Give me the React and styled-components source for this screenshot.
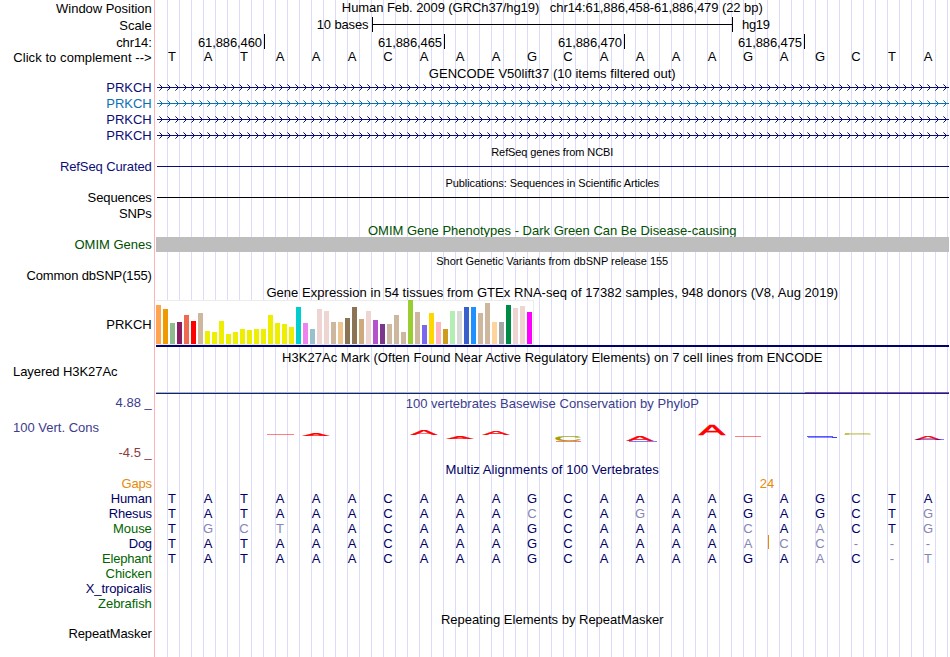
import React from 'react';
import styled, { createGlobalStyle } from 'styled-components';

const GlobalStyle = createGlobalStyle`
  body { margin: 0; background: #fff; }
  * { box-sizing: border-box; }
`;

const NAVY = '#0c0c78';
const DEEP = '#000064';
const GREEN = '#006400';
const ORANGE = '#e68a0a';

const Browser = styled.main`
  width: 949px;
  height: 657px;
  overflow: hidden;
  font: 13px/15px "Liberation Sans", Arial, sans-serif;
  color: #000;
  background:
    linear-gradient(#ffb4b4, #ffb4b4) 154px 0 / 1px 100% no-repeat,
    repeating-linear-gradient(to right, transparent 0 11px, #dcdcfa 11px 12px) 156px 0 / 793px 100% no-repeat;
`;

const Row = styled.div`
  display: grid;
  grid-template-columns: 154px 795px;
  height: ${(p) => p.$h}px;
`;

const Labels = styled.div`
  display: flex;
  flex-direction: column;
  gap: 10px;
  padding: ${(p) => p.$top || 0}px 2.25px 0 13px;
`;

const Label = styled.span`
  align-self: ${(p) => (p.$left ? 'flex-start' : 'flex-end')};
  height: 15px;
  white-space: pre;
  color: ${(p) => p.$color || '#000'};
  letter-spacing: ${(p) => p.$ls || 0}px;
`;

const Track = styled.div`
  display: flex;
  flex-direction: column;
  min-width: 0;
  padding-left: 2px;
  padding-top: ${(p) => p.$top || 0}px;
`;

const Title = styled.h2`
  flex: none;
  margin: 0;
  padding-top: ${(p) => p.$top || 0}px;
  padding-right: 0.5px;
  height: 15px;
  overflow: ${(p) => (p.$clip ? 'hidden' : 'visible')};
  text-align: center;
  white-space: pre;
  font-weight: 400;
  font-size: ${(p) => (p.$small ? 11 : 13)}px;
  line-height: ${(p) => (p.$small ? 12 : 15)}px;
  color: ${(p) => p.$color || '#000'};
  letter-spacing: ${(p) => p.$ls || 0}px;
`;

const ScaleTrack = styled.div`
  display: grid;
  grid-template-columns: 214.5px 361px auto;
  column-gap: 3.5px;
  height: 15px;
`;

const ScaleText = styled.span`
  text-align: ${(p) => (p.$end ? 'right' : 'left')};
  padding-left: ${(p) => (p.$end ? 0 : 5.5)}px;
  letter-spacing: ${(p) => p.$ls}px;
  white-space: nowrap;
`;

const ScaleBar = styled.div`
  height: 15px;
  border: solid #000;
  border-width: 0 1px;
  background: linear-gradient(#000, #000) 0 7px / 100% 1px no-repeat;
`;

const Ruler = styled.div`
  display: grid;
  grid-template-columns: 111px repeat(3, 180px);
  padding-top: 1px;
`;

const Tick = styled.span`
  height: 15px;
  padding: 1px 2px 0 0;
  line-height: 15px;
  border-right: 1px solid #000;
  text-align: right;
  letter-spacing: -0.1px;
`;

const Bases = styled.div`
  position: relative;
  display: grid;
  grid-template-columns: repeat(22, 36px);
  height: 15px;
  text-align: center;
`;

const Base = styled.span`
  color: ${(p) => p.$color};
`;

const GapCount = styled.span`
  grid-column: 17 / span 2;
  padding-left: 2px;
  color: ${ORANGE};
`;

const Insertion = styled.span`
  position: absolute;
  left: 614px;
  top: -1px;
  width: 1px;
  height: 14px;
  background: ${ORANGE};
`;

const Rule = styled.div`
  height: 1px;
  margin: 7px 0 0 1px;
  background: ${(p) => p.$color};
`;

const OmimBar = styled.div`
  height: 15px;
  background: #bebebe;
`;

const Expression = styled.div`
  display: flex;
  align-items: flex-end;
  gap: 2px;
  width: 378px;
  height: 45px;
  background: #fff;
  border: solid #ececec;
  border-width: 1px 1px 1px 0;
`;

const Tissue = styled.span`
  flex: none;
  width: 5px;
  height: ${(p) => p.$h}px;
  background: ${(p) => p.$c};
`;

const GeneModel = styled.div`
  height: 2px;
  background: #00006e;
`;

const Signal = styled.div`
  height: 2px;
  margin-top: 28px;
  background:
    linear-gradient(to right, #73c3ff 649px, #5a5aff 649px) 0 0 / 100% 1px no-repeat,
    #46143c;
`;

const Drawing = styled.svg`
  display: block;
  flex: none;
  font: 13px "Liberation Sans", Arial, sans-serif;
`;

// Strand arrows, one every 8px; the tips of the arms are drawn fainter.
const steps = Array.from({ length: 99 }, (_, i) => 6 + i * 8);
const dots = (offsets) =>
  steps.flatMap((x) => offsets.map((d) => `M${x - Math.abs(d)} ${7 + d}h1v1h-1z`)).join('');
const armDots = dots([-2, -1, 1, 2]);
const tipDots = dots([-3, 3]);

function Intron({ color }) {
  return (
    <Drawing width="793" height="16" shapeRendering="crispEdges">
      <path d="M1 7.5H793" stroke={color} />
      <path d={armDots} fill={color} />
      <path d={tipDots} fill={color} fillOpacity="0.6" />
    </Drawing>
  );
}

const HUMAN = 'TATAAACAAAGCAAAAGAGCTA';

function Sequence({ bases, color = DEEP, children }) {
  return (
    <Bases>
      {[...bases].map((b, i) => (
        <Base key={i} $color={b === HUMAN[i] ? color : '#8686b4'}>{b}</Base>
      ))}
      {children}
    </Bases>
  );
}

const Y = '#eeee00';
const TAN = '#cdb79e';
const PINK = '#eed5d2';
const tissues = [
  [39, '#ffa54f'], [35, '#ee9a00'], [21, '#8fbc8f'], [22, '#8b1c62'], [29, '#ee6a50'], [23, '#ff0000'], [31, TAN],
  [13, Y], [12, Y], [23, Y], [10, Y], [12, Y], [15, Y], [14, Y], [15, Y], [15, Y], [29, Y], [21, Y], [20, Y], [17, Y],
  [37, '#00cdcd'], [21, '#ee82ee'], [15, '#9ac0cd'], [35, PINK], [33, PINK], [22, TAN], [22, '#eec591'],
  [26, '#8b7355'], [37, '#8b7355'], [25, '#cdaa7d'], [33, PINK], [24, '#b452cd'], [20, '#7a378b'], [20, TAN],
  [29, TAN], [12, TAN], [44, '#9acd32'], [32, TAN], [19, '#7a67ee'], [31, '#ffd700'], [22, '#ffb6c1'],
  [15, '#cd9b1d'], [33, '#b4eeb4'], [33, '#d9d9d9'], [37, '#3a5fcd'], [37, '#1e90ff'], [31, TAN], [41, TAN],
  [22, '#ffd39b'], [22, '#a6a6a6'], [39, '#008b45'], [36, PINK], [38, PINK], [32, '#ff00ff'],
];

const RED = '#ff0000';
const OLIVE = '#a0a000';
const BLUE = '#0000ff';
// Conservation letters: [column, letter, colour, baseline, height]
const logo = [
  [4, 'A', RED, 24.5, 2.7],
  [7, 'A', RED, 24, 4.8],
  [8, 'A', RED, 28.4, 2.6],
  [9, 'A', RED, 24.2, 4],
  [11, 'C', OLIVE, 30, 5],
  [13, 'A', RED, 30, 5],
  [15, 'A', RED, 24, 10],
  [21, 'A', RED, 28.6, 3.2],
];

// Scores near zero, drawn as flat streaks: [left, top, width, height, colour, opacity]
const streaks = [
  [111, 23, 27, 1, RED, 0.5],
  [400, 30, 25, 1, RED, 0.5],
  [473, 30, 28, 1, BLUE, 0.5],
  [579, 25, 26, 1, RED, 0.5],
  [651, 25, 26, 1, BLUE, 0.65],
  [652, 26, 29, 1, BLUE, 0.45],
  [676, 26, 5, 1, BLUE, 0.6],
  [689, 22, 25, 1, OLIVE, 0.45],
  [688, 23, 27, 1, OLIVE, 0.35],
  [689, 22, 4, 2, OLIVE, 0.4],
  [760, 28, 28, 1, BLUE, 0.5],
];

function Conservation() {
  return (
    <Drawing width="793" height="40">
      {logo.map(([col, ch, color, y, h], i) => (
        <text
          key={i}
          fill={color}
          stroke={color}
          strokeWidth="0.4"
          textAnchor="middle"
          transform={`translate(${col * 36 + 16} ${y}) scale(${ch === 'A' ? 3.05 : 3} ${h / 9})`}
        >
          {ch}
        </text>
      ))}
      {streaks.map(([x, y, w, h, color, opacity], i) => (
        <rect key={i} x={x} y={y} width={w} height={h} fill={color} fillOpacity={opacity} />
      ))}
    </Drawing>
  );
}

const genes = [NAVY, '#0c70b4', NAVY, NAVY];

const species = [
  ['Human', DEEP, -0.2, HUMAN],
  ['Rhesus', DEEP, -0.2, 'TATAAACAAACCAGAAGAGCTG'],
  ['Mouse', GREEN, -0.07, 'TGCTAACAAAGCAAAACAACTG'],
  ['Dog', DEEP, -0.3, 'TATAAACAAAGCAAAAACC---'],
  ['Elephant', GREEN, -0.2, 'TATAAACAAAGCAAAAGAAC-T'],
  ['Chicken', GREEN, -0.12, ''],
  ['X_tropicalis', DEEP, -0.1, ''],
  ['Zebrafish', GREEN, -0.06, ''],
];

function TitleRow({ h, text, ...rest }) {
  return (
    <Row $h={h}>
      <Labels />
      <Track><Title {...rest}>{text}</Title></Track>
    </Row>
  );
}

export default function App() {
  return (
    <>
      <GlobalStyle />
      <Browser>
        <Row $h={17}>
          <Labels $top={1}><Label $ls={-0.03}>Window Position</Label></Labels>
          <Track>
            <Title $ls={-0.073}>{'Human Feb. 2009 (GRCh37/hg19)   chr14:61,886,458-61,886,479 (22 bp)'}</Title>
          </Track>
        </Row>
        <Row $h={16}>
          <Labels $top={1}><Label>Scale</Label></Labels>
          <ScaleTrack>
            <ScaleText $end $ls={-0.12}>10 bases</ScaleText>
            <ScaleBar />
            <ScaleText $ls={-0.3}>hg19</ScaleText>
          </ScaleTrack>
        </Row>
        <Row $h={16}>
          <Labels $top={2}><Label $ls={-0.1}>chr14:</Label></Labels>
          <Ruler>
            <Tick>61,886,460</Tick>
            <Tick>61,886,465</Tick>
            <Tick>61,886,470</Tick>
            <Tick>61,886,475</Tick>
          </Ruler>
        </Row>
        <Row $h={17}>
          <Labels $top={1}><Label $ls={0.07}>{'Click to complement -->'}</Label></Labels>
          <Sequence bases={HUMAN} color="#000" />
        </Row>

        <TitleRow h={14} $ls={0.03} text="GENCODE V50lift37 (10 items filtered out)" />
        {genes.map((color, i) => (
          <Row $h={16} key={i}>
            <Labels><Label $color={color}>PRKCH</Label></Labels>
            <Track><Intron color={color} /></Track>
          </Row>
        ))}

        <TitleRow h={15} $small $top={2} $ls={-0.098} text="RefSeq genes from NCBI" />
        <Row $h={16}>
          <Labels><Label $color={NAVY} $ls={-0.1}>RefSeq Curated</Label></Labels>
          <Track><Rule $color={NAVY} /></Track>
        </Row>

        <TitleRow h={15} $small $top={2} $ls={-0.09} text="Publications: Sequences in Scientific Articles" />
        <Row $h={16}>
          <Labels><Label $ls={-0.1}>Sequences</Label></Labels>
          <Track><Rule $color="#000" /></Track>
        </Row>
        <Row $h={16}>
          <Labels><Label $ls={-0.1}>SNPs</Label></Labels>
        </Row>

        <TitleRow h={15} $clip $top={1} $color="#005000" text="OMIM Gene Phenotypes - Dark Green Can Be Disease-causing" />
        <Row $h={16}>
          <Labels><Label $color="#005000">OMIM Genes</Label></Labels>
          <Track><OmimBar /></Track>
        </Row>

        <TitleRow h={15} $small $top={2} $ls={-0.028} text="Short Genetic Variants from dbSNP release 155" />
        <Row $h={16}>
          <Labels><Label $ls={-0.15}>Common dbSNP(155)</Label></Labels>
        </Row>

        <TitleRow h={16} $top={1} $ls={0.049} text="Gene Expression in 54 tissues from GTEx RNA-seq of 17382 samples, 948 donors (V8, Aug 2019)" />
        <Row $h={50}>
          <Labels $top={17}><Label>PRKCH</Label></Labels>
          <Track>
            <Expression>
              {tissues.map(([h, c], i) => <Tissue key={i} $h={h} $c={c} />)}
            </Expression>
            <GeneModel />
          </Track>
        </Row>

        <TitleRow h={14} $ls={0.034} text="H3K27Ac Mark (Often Found Near Active Regulatory Elements) on 7 cell lines from ENCODE" />
        <Row $h={31}>
          <Labels><Label $left $ls={-0.07}>Layered H3K27Ac</Label></Labels>
          <Track><Signal /></Track>
        </Row>

        <Row $h={67}>
          <Labels>
            <Label $color="#3c3c8c">4.88 _</Label>
            <Label $left $color="#3c3c8c">100 Vert. Cons</Label>
            <Label $color="#8c3c3c">-4.5 _</Label>
          </Labels>
          <Track $top={1}>
            <Title $color="#3c3c8c" $ls={0.027}>100 vertebrates Basewise Conservation by PhyloP</Title>
            <Conservation />
          </Track>
        </Row>

        <TitleRow h={14} $color={DEEP} $ls={0.065} text="Multiz Alignments of 100 Vertebrates" />
        <Row $h={15}>
          <Labels><Label $color={ORANGE} $ls={-0.2}>Gaps</Label></Labels>
          <Bases><GapCount>24</GapCount></Bases>
        </Row>
        {species.map(([name, color, ls, bases]) => (
          <Row $h={15} key={name}>
            <Labels><Label $color={color} $ls={ls}>{name}</Label></Labels>
            <Sequence bases={bases}>{name === 'Dog' && <Insertion />}</Sequence>
          </Row>
        ))}

        <TitleRow h={15} $top={1} text="Repeating Elements by RepeatMasker" />
        <Row $h={31}>
          <Labels><Label $ls={-0.1}>RepeatMasker</Label></Labels>
        </Row>
      </Browser>
    </>
  );
}
